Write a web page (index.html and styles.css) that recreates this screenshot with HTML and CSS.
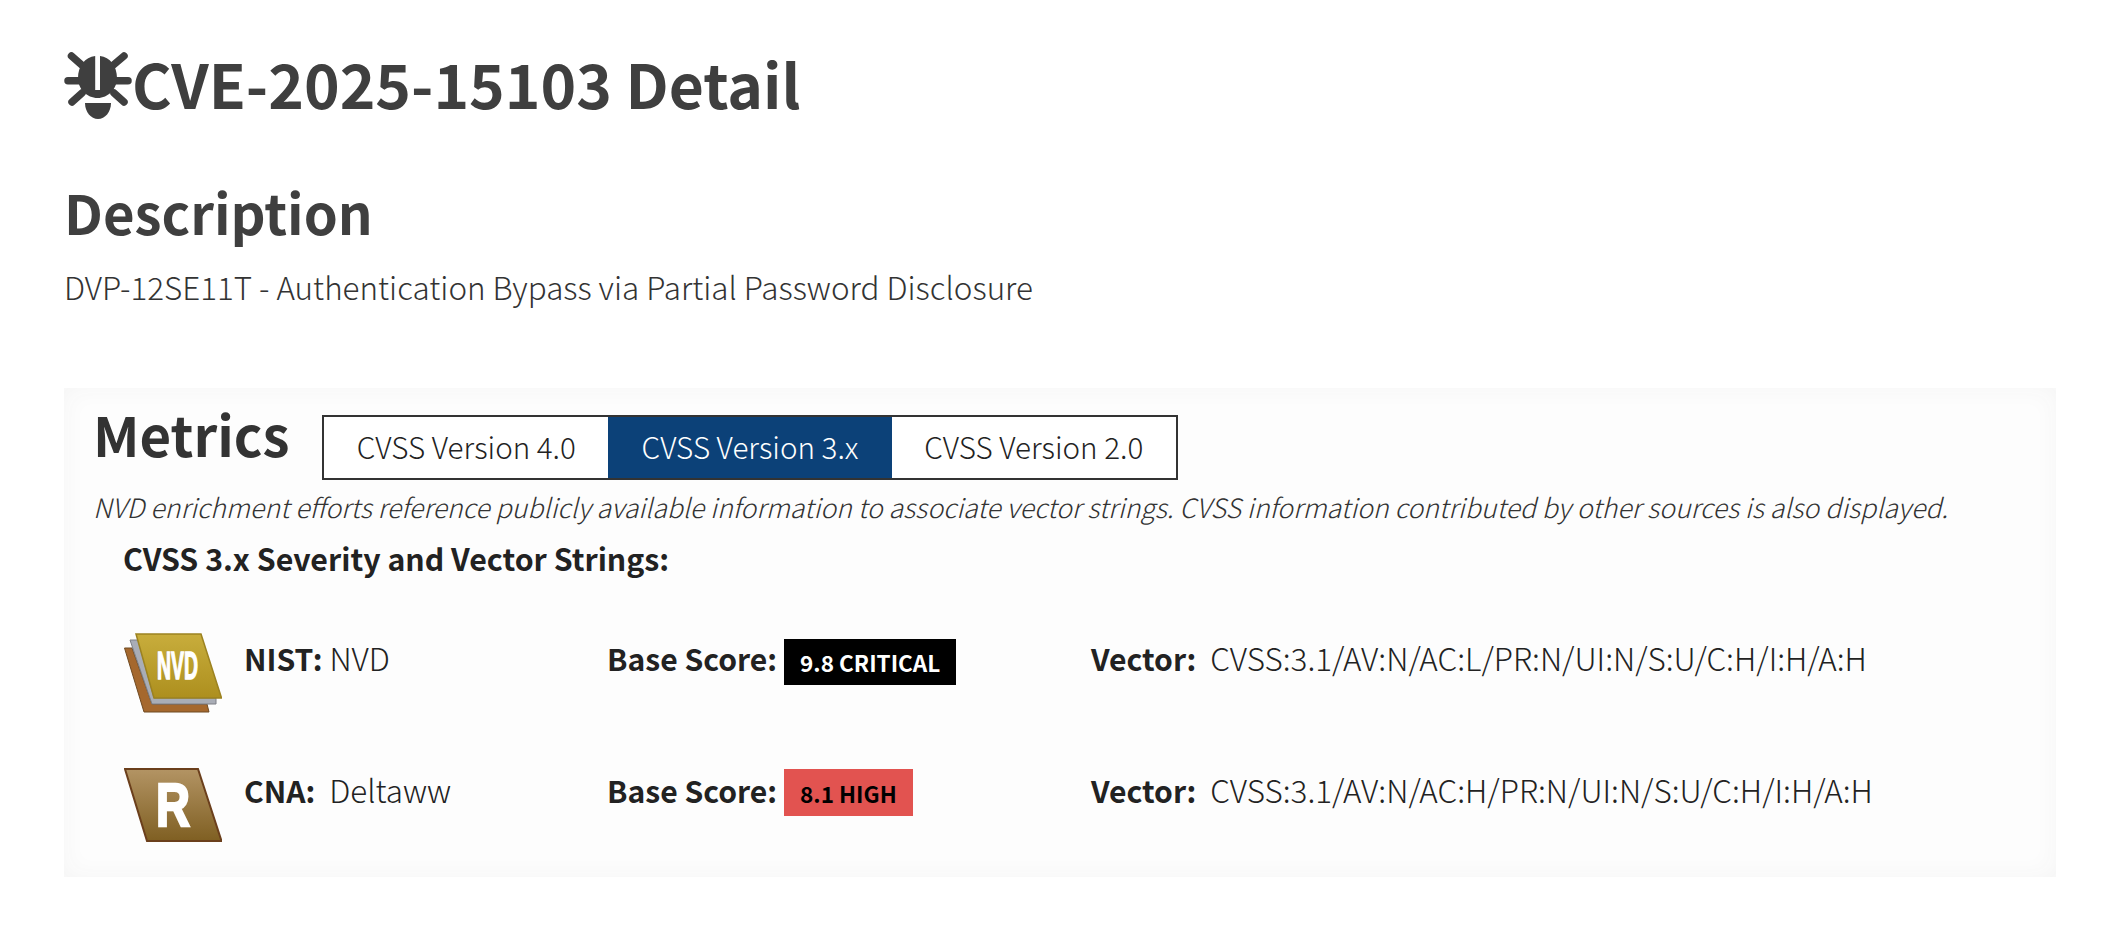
FILE: index.html
```html
<!DOCTYPE html>
<html lang="en">
<head>
<meta charset="utf-8">
<title>CVE-2025-15103 Detail</title>
<link rel="stylesheet" href="styles.css">
</head>
<body>
<main class="page">
  <h1 class="title">
    <svg class="bug" viewBox="0 0 68 68" aria-hidden="true">
      <g stroke="#3f3f3f" stroke-width="7.5" stroke-linecap="round" fill="none">
        <path d="M7.5 4 20 15M60 4 47 15M4 28.7H16M52 28.7H64M8 50 18 41M60 50 50 41"/>
      </g>
      <path fill="#3f3f3f" d="M31.2 4V38H36V4C46 5 53 14 53 26C53 37 44 46 33.7 46C23 46 14 37 14 26C14 14 21 5 31.2 4Z"/>
      <path fill="#3f3f3f" d="M21 51H47C47 60 41 67 34 67C27 67 21 60 21 51Z"/>
    </svg>
    <span>CVE-2025-15103 Detail</span>
  </h1>
  <h2 class="section">Description</h2>
  <p class="desc">DVP-12SE11T - Authentication Bypass via Partial Password Disclosure</p>

  <section class="panel">
    <div class="head">
      <h2 class="section metrics">Metrics</h2>
      <div class="tabs">
        <span class="tab">CVSS Version 4.0</span>
        <span class="tab active">CVSS Version 3.x</span>
        <span class="tab">CVSS Version 2.0</span>
      </div>
    </div>
    <p class="note">NVD enrichment efforts reference publicly available information to associate vector strings. CVSS information contributed by other sources is also displayed.</p>
    <h3 class="sub">CVSS 3.x Severity and Vector Strings:</h3>

    <div class="row row-nvd">
      <svg class="logo" viewBox="0 0 98 80" aria-hidden="true">
        <defs>
          <linearGradient id="gold" x1="0" y1="0" x2="0" y2="1">
            <stop offset="0" stop-color="#c8ad3c"/><stop offset="1" stop-color="#ad8f1e"/>
          </linearGradient>
        </defs>
        <polygon points="0.5,15 8,15 28,71 83,71 85,79 20,79" fill="#a5682e" stroke="#6f4a22" stroke-width="1"/>
        <polygon points="6,7 14,7 30,65 92,65 92,71 28,71" fill="#a9adb6" stroke="#7c7f86" stroke-width="1"/>
        <polygon points="12,1 77,1 97.5,65 30,65" fill="url(#gold)" stroke="#9c8220" stroke-width="1.5"/>
        <text class="mark mark-nvd" x="33" y="46" font-size="39" textLength="41" lengthAdjust="spacingAndGlyphs">NVD</text>
      </svg>
      <div class="who"><b>NIST:</b> NVD</div>
      <div class="score"><b>Base Score:</b> <span class="badge critical">9.8 CRITICAL</span></div>
      <div class="vector"><b>Vector:</b>&nbsp; CVSS:3.1/AV:N/AC:L/PR:N/UI:N/S:U/C:H/I:H/A:H</div>
    </div>

    <div class="row row-cna">
      <svg class="logo" viewBox="0 0 98 74" aria-hidden="true">
        <defs>
          <linearGradient id="bronze" x1="0" y1="0" x2="0" y2="1">
            <stop offset="0" stop-color="#b39464"/><stop offset="1" stop-color="#7f5f22"/>
          </linearGradient>
        </defs>
        <polygon points="1,1 74,1 97.5,73 23,73" fill="url(#bronze)" stroke="#6b3f1c" stroke-width="2"/>
        <text class="mark mark-r" x="32" y="58" font-size="61" textLength="34" lengthAdjust="spacingAndGlyphs">R</text>
      </svg>
      <div class="who"><b>CNA:</b>&nbsp; Deltaww</div>
      <div class="score"><b>Base Score:</b> <span class="badge high">8.1 HIGH</span></div>
      <div class="vector"><b>Vector:</b>&nbsp; CVSS:3.1/AV:N/AC:H/PR:N/UI:N/S:U/C:H/I:H/A:H</div>
    </div>
  </section>
</main>
</body>
</html>
```
FILE: styles.css
```css
* { box-sizing: border-box; }
html, body { margin: 0; background: #fff; }
body {
  font-family: "Noto Sans CJK SC", "Noto Sans", sans-serif;
  color: #222;
  width: 2106px;
  height: 928px;
  overflow: hidden;
}
.page { padding: 52px 50px 0 64px; }
.title {
  display: flex;
  align-items: flex-start;
  margin: 0;
  height: 68px;
  font-size: 60.5px;
  line-height: 62px;
  font-weight: 700;
  color: #3f3f3f;
}
.bug { width: 68px; height: 68px; flex: none; }
.section {
  margin: 60px 0 0;
  font-size: 54.5px;
  line-height: 64px;
  font-weight: 700;
  color: #3f3f3f;
}
.desc {
  margin: 21px 0 0;
  font-size: 31.4px;
  line-height: 44px;
  font-weight: 300;
  color: #333;
}
.panel {
  margin-top: 79px;
  height: 489px;
  padding: 28px 30px 0 29px;
  background: #fdfdfd;
  box-shadow: inset 0 0 24px #f5f5f5;
}
.head { display: flex; align-items: flex-start; gap: 33px; }
.metrics { margin: -14px 0 0; color: #333; }
.tabs { display: flex; border: 2px solid #333; height: 65px; margin-top: -1px; }
.tab {
  width: 283.7px;
  display: flex;
  align-items: center;
  justify-content: center;
  padding-bottom: 3px;
  font-size: 29.6px;
  font-weight: 300;
  color: #222;
  background: #fff;
}
.active { background: #0c4178; color: #fff; }
.note {
  margin: 7px 0 0;
  font-size: 26.65px;
  line-height: 40px;
  font-weight: 300;
  font-style: italic;
  color: #333;
  white-space: nowrap;
}
.sub {
  margin: 10px 0 0 30px;
  font-size: 30.3px;
  line-height: 42px;
  font-weight: 700;
  color: #222;
}
.row {
  display: grid;
  grid-template-columns: 120px 363px 484px 1fr;
  align-items: start;
  margin-left: 31px;
  font-size: 31.4px;
  font-weight: 300;
  color: #222;
}
.row b { font-weight: 700; font-size: 30.1px; }
.row-nvd { margin-top: 54px; height: 80px; line-height: 50px; }
.row-cna { margin-top: 55px; height: 74px; line-height: 44px; }
.logo { width: 98px; display: block; }
.score { display: flex; align-items: flex-start; gap: 7px; }
.badge {
  display: inline-flex;
  align-items: center;
  padding: 0 16px;
  font-size: 22.5px;
  font-weight: 700;
  line-height: 46px;
  height: 46px;
}
.critical { background: #000; color: #fff; margin-top: 6px; }
.high { background: #e25350; color: #000; margin-top: 1px; height: 47px; }
.mark { font-family: "Liberation Sans Narrow", "Liberation Sans", sans-serif; font-weight: 700; fill: #fff; stroke: #fff; }
.mark-nvd { stroke-width: 1.5; }
.mark-r { stroke-width: 2.5; }
```
